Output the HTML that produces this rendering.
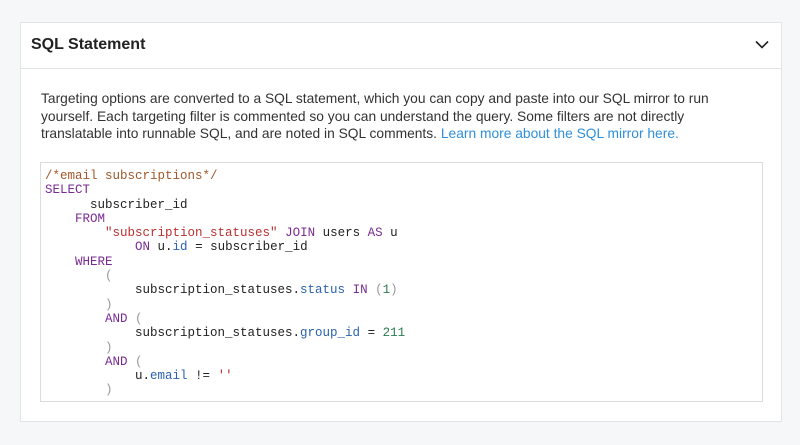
<!DOCTYPE html>
<html><head><style>
body{margin:0;background:#f6f7f9;width:800px;height:445px;overflow:hidden;font-family:"Liberation Sans",sans-serif;}
.card{position:absolute;left:20px;top:22px;width:760px;height:398px;background:#fff;border:1px solid #e3e4e6;}
.hd{height:45px;border-bottom:1px solid #e3e4e6;position:relative;}
.hd h2{margin:0;position:absolute;left:10px;top:13px;font-size:16px;font-weight:bold;color:#222;}
.hd svg{position:absolute;right:12px;top:17px;}
p{position:absolute;left:20px;top:67px;width:705px;margin:0;font-size:13.8px;line-height:17.5px;color:#333;}
a{color:#2f8fd8;text-decoration:none}
pre{position:absolute;left:19px;top:139px;width:717px;height:232px;margin:0;border:1px solid #dcdcdc;padding:6px 0 0 4px;font-family:"Liberation Mono",monospace;font-size:12.5px;line-height:14.3px;color:#222;}
.c{color:#a0582a}.k{color:#7a2b93}.s{color:#b8312f}.p{color:#2a62b0}.n{color:#2a7a52}.g{color:#999}
</style></head><body>
<div class="card">
<div class="hd"><h2>SQL Statement</h2>
<svg width="14" height="9" viewBox="0 0 14 9"><path d="M1 1.5L7 7.5L13 1.5" fill="none" stroke="#222" stroke-width="1.6"/></svg></div>
<p>Targeting options are converted to a SQL statement, which you can copy and paste into our SQL mirror to run yourself. Each targeting filter is commented so you can understand the query. Some filters are not directly translatable into runnable SQL, and are noted in SQL comments. <a>Learn more about the SQL mirror here.</a></p>
<pre><span class="c">/*email subscriptions*/</span>
<span class="k">SELECT</span>
      subscriber_id
    <span class="k">FROM</span>
        <span class="s">"subscription_statuses"</span> <span class="k">JOIN</span> users <span class="k">AS</span> u
            <span class="k">ON</span> u.<span class="p">id</span> = subscriber_id
    <span class="k">WHERE</span>
        <span class="g">(</span>
            subscription_statuses.<span class="p">status</span> <span class="k">IN</span> <span class="g">(</span><span class="n">1</span><span class="g">)</span>
        <span class="g">)</span>
        <span class="k">AND</span> <span class="g">(</span>
            subscription_statuses.<span class="p">group_id</span> = <span class="n">211</span>
        <span class="g">)</span>
        <span class="k">AND</span> <span class="g">(</span>
            u.<span class="p">email</span> != <span class="s">''</span>
        <span class="g">)</span></pre>
</div>
</body></html>
